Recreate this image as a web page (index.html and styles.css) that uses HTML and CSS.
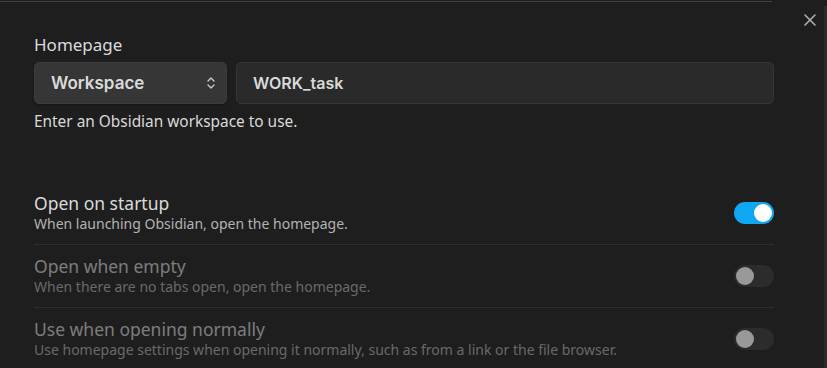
FILE: index.html
```html
<!DOCTYPE html>
<html lang="en">
<head>
    <meta charset="UTF-8">
    <meta name="viewport" content="width=device-width, initial-scale=1.0">
    <title>Homepage settings</title>
    <link rel="stylesheet" href="styles.css">
</head>
<body>
    <div class="modal">
        <button class="close-btn" aria-label="Close">
            <svg width="14" height="14" viewBox="0 0 14 14"><path d="M2 2 L12 12 M12 2 L2 12" stroke="#b0b0b0" stroke-width="1.6" stroke-linecap="round"/></svg>
        </button>
        <div class="scroll-track"></div>

        <div class="content">
            <div class="homepage-block">
                <div class="block-title">Homepage</div>
                <div class="homepage-row">
                    <div class="dropdown">
                        <span>Workspace</span>
                        <svg width="10" height="14" viewBox="0 0 10 14"><path d="M2 5 L5 2 L8 5 M2 9 L5 12 L8 9" fill="none" stroke="#cfcfcf" stroke-width="1.3" stroke-linecap="round" stroke-linejoin="round"/></svg>
                    </div>
                    <div class="text-input">WORK_task</div>
                </div>
                <div class="block-desc">Enter an Obsidian workspace to use.</div>
            </div>

            <div class="setting-list">
                <div class="setting-item">
                    <div class="setting-info">
                        <div class="setting-name">Open on startup</div>
                        <div class="setting-desc">When launching Obsidian, open the homepage.</div>
                    </div>
                    <div class="toggle on"><div class="knob"></div></div>
                </div>
                <div class="setting-item disabled">
                    <div class="setting-info">
                        <div class="setting-name">Open when empty</div>
                        <div class="setting-desc">When there are no tabs open, open the homepage.</div>
                    </div>
                    <div class="toggle"><div class="knob"></div></div>
                </div>
                <div class="setting-item disabled">
                    <div class="setting-info">
                        <div class="setting-name">Use when opening normally</div>
                        <div class="setting-desc">Use homepage settings when opening it normally, such as from a link or the file browser.</div>
                    </div>
                    <div class="toggle"><div class="knob"></div></div>
                </div>
            </div>
        </div>
    </div>
</body>
</html>
```

FILE: styles.css
```css
html, body {
    margin: 0;
    height: 100%;
    background-color: #1e1e1e;
    font-family: "Noto Sans", "Open Sans", sans-serif;
    color: #dadada;
    overflow: hidden;
}
.modal {
    position: relative;
    height: 100%;
    box-sizing: border-box;
    padding-top: 1px;
}
.modal::before {
    content: "";
    display: block;
    height: 1px;
    margin-right: 55px;
    background-color: #414141;
}
.close-btn {
    position: absolute;
    top: 13px;
    right: 10px;
    padding: 0;
    background: none;
    border: none;
    width: 14px;
    height: 14px;
    cursor: pointer;
}
.scroll-track {
    position: absolute;
    top: 6px;
    right: 0;
    width: 3px;
    bottom: 0;
    background-color: #2b2b2b;
}
.content {
    padding: 0 53px 0 34px;
}
.homepage-block {
    padding-top: 32px;
}
.block-title {
    font-size: 17px;
    line-height: 22px;
}
.homepage-row {
    display: flex;
    gap: 9px;
    margin-top: 6px;
}
.dropdown {
    width: 193px;
    height: 42px;
    box-sizing: border-box;
    display: flex;
    align-items: center;
    justify-content: space-between;
    padding: 0 10px 0 16px;
    background-color: #363636;
    border: 1px solid #3c3c3c;
    border-radius: 5px;
    box-shadow: 0 1px 2px rgba(0,0,0,0.3);
    font-family: Inter, sans-serif;
    font-weight: 600;
    font-size: 17px;
}
.text-input {
    flex: 1;
    height: 42px;
    box-sizing: border-box;
    display: flex;
    align-items: center;
    padding: 0 16px;
    background-color: #2a2a2a;
    border: 1px solid #363636;
    border-radius: 5px;
    font-family: Inter, sans-serif;
    font-weight: 600;
    font-size: 16px;
}
.block-desc {
    font-size: 15.4px;
    line-height: 20px;
    margin-top: 8px;
}
.setting-list {
    margin-top: 50px;
}
.setting-item {
    display: flex;
    align-items: center;
    justify-content: space-between;
    padding: 11px 0;
    border-bottom: 1px solid #2f2f2f;
}
.setting-item:last-child {
    border-bottom: none;
}
.setting-name {
    font-size: 17.5px;
    line-height: 20px;
    color: #dadada;
}
.setting-desc {
    font-size: 14px;
    line-height: 18px;
    margin-top: 2px;
    color: #b3b3b3;
}
.setting-item.disabled .setting-info {
    opacity: 0.5;
}
.toggle {
    position: relative;
    width: 40px;
    height: 22px;
    border-radius: 11px;
    background-color: #2c2c2c;
    flex-shrink: 0;
}
.toggle .knob {
    position: absolute;
    top: 2px;
    left: 2px;
    width: 18px;
    height: 18px;
    border-radius: 50%;
    background-color: #999;
}
.toggle.on {
    background-color: #0fa6f2;
}
.toggle.on .knob {
    left: 20px;
    background-color: #fff;
}
```
